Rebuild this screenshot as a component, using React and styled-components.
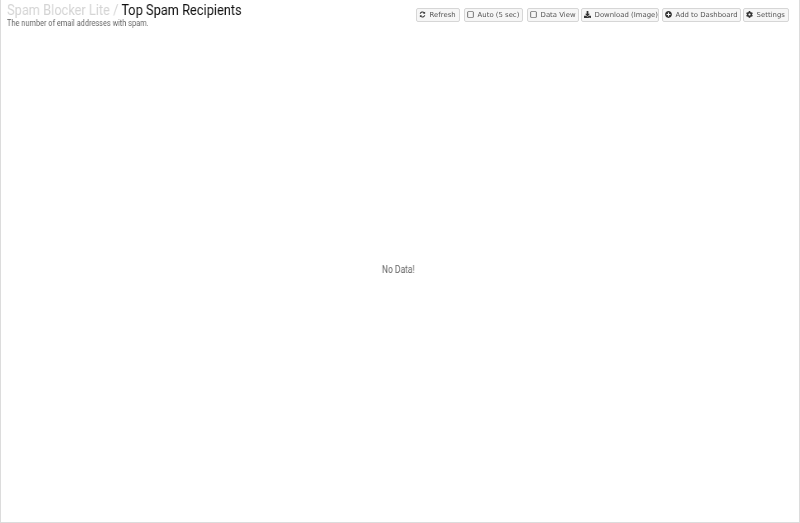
import React from "react";
import styled, { createGlobalStyle } from "styled-components";
import { FaDownload, FaPlusCircle, FaCog, FaRegSquare } from "react-icons/fa";

const Global = createGlobalStyle`
  html, body { margin: 0; padding: 0; background: #fff; height: 100%; overflow: hidden; }
  #root { height: 100%; }
`;

const Page = styled.div`
  box-sizing: border-box;
  width: 800px;
  height: 523px;
  border: 1px solid #dcdcdc;
  border-top: 0;
  display: flex;
  flex-direction: column;
  font-family: Roboto, "Liberation Sans", sans-serif;
`;

const Header = styled.header`
  display: flex;
  justify-content: space-between;
  align-items: flex-start;
  padding: 0 10px 0 6px;
  height: 29px;
`;

const Titles = styled.div`
  display: flex;
  flex-direction: column;
  align-items: flex-start;
`;

const Title = styled.h1`
  margin: 2px 0 0;
  font-size: 15.5px;
  line-height: 16px;
  font-weight: 400;
  color: #111;
  white-space: nowrap;
  transform: scaleX(0.826);
  transform-origin: left center;
  will-change: transform;
`;

const Crumb = styled.span`
  color: #d4d4d4;
`;

const Subtitle = styled.p`
  margin: 0;
  font-size: 9px;
  line-height: 11px;
  color: #666;
  white-space: nowrap;
  transform: scaleX(0.82);
  transform-origin: left center;
  will-change: transform;
`;

const Toolbar = styled.div`
  display: flex;
  margin-top: 8px;
`;

const Button = styled.button`
  display: flex;
  align-items: center;
  gap: 3.6px;
  box-sizing: border-box;
  height: 14px;
  width: ${(p) => p.$w}px;
  margin-left: ${(p) => p.$ml || 0}px;
  padding: 0 0 0 2px;
  border: 1px solid #d6d6d6;
  border-radius: 2px;
  background: #f6f6f6;
  color: #555;
  font-family: "DejaVu Sans", sans-serif;
  font-size: 6.9px;
  line-height: 1;
  white-space: nowrap;
  will-change: transform;
  svg { display: block; width: 7px; height: 7px; flex: none; margin-top: -1px; color: #333; }
`;

const Body = styled.main`
  flex: 1;
  display: flex;
  align-items: center;
  justify-content: center;
  padding: 0 3px 13px 0;
  font-size: 10px;
  color: #666;
`;

const Message = styled.span`
  display: block;
  transform: scaleX(0.85);
  will-change: transform;
`;

const RefreshIcon = () => (
  <svg viewBox="0 0 16 16" fill="currentColor" aria-hidden="true">
    <path d="M14 1.5v5H9l1.9-1.9A4.2 4.2 0 0 0 4 6.2H1.6A6.6 6.6 0 0 1 12.6 2.9L14 1.5zM2 14.5v-5h5l-1.9 1.9A4.2 4.2 0 0 0 12 9.8h2.4A6.6 6.6 0 0 1 3.4 13.1L2 14.5z" />
  </svg>
);

export default function App() {
  return (
    <Page>
      <Global />
      <Header>
        <Titles>
          <Title><Crumb>Spam Blocker Lite / </Crumb>Top Spam Recipients</Title>
          <Subtitle>The number of email addresses with spam.</Subtitle>
        </Titles>
        <Toolbar>
          <Button $w={44}><RefreshIcon />Refresh</Button>
          <Button $w={59} $ml={4}><FaRegSquare />Auto (5 sec)</Button>
          <Button $w={52} $ml={4}><FaRegSquare />Data View</Button>
          <Button $w={78} $ml={2}><FaDownload />Download (Image)</Button>
          <Button $w={79} $ml={3}><FaPlusCircle />Add to Dashboard</Button>
          <Button $w={46} $ml={2}><FaCog />Settings</Button>
        </Toolbar>
      </Header>
      <Body><Message>No Data!</Message></Body>
    </Page>
  );
}
